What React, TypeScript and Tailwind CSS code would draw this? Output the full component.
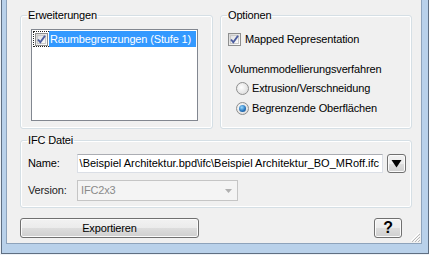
import React from "react";

function Check() {
  return (
    <div className="relative w-[13px] h-[13px] flex-none border border-[#8e8f8f] bg-[linear-gradient(135deg,#d6d6d6,#ffffff)] p-[1px]">
      <div className="w-full h-full border border-[#c9c9c9] bg-[linear-gradient(135deg,#e2e2e2,#fbfbfb)]" />
      <svg className="absolute left-0 top-0" width="11" height="11" viewBox="0 0 11 11">
        <path d="M2 5.5 L4.3 8.3 L9 1.8" fill="none" stroke="#4b5c9e" strokeWidth="1.9" />
      </svg>
    </div>
  );
}

function Radio({ on }: { on?: boolean }) {
  return (
    <div className="w-[13px] h-[13px] flex-none rounded-full border border-[#8e8f8f] bg-[radial-gradient(circle_at_40%_40%,#ffffff,#d4d4d4)] flex items-center justify-center">
      {on && (
        <div className="w-[7px] h-[7px] rounded-full bg-[radial-gradient(circle_at_40%_35%,#9adbff,#2a78c0_55%,#0e3f78)]" />
      )}
    </div>
  );
}

const btn =
  "border border-[#707070] rounded-[3px] bg-[linear-gradient(#f2f2f2,#ebebeb_50%,#dddddd_50%,#cfcfcf)] shadow-[inset_0_0_0_1px_#fbfbfb] flex items-center justify-center";

export default function App() {
  return (
    <div className="w-[429px] h-[255px] bg-[#eef2f7] pl-[1px] pb-[1px] font-['Liberation_Sans',Arial,sans-serif] text-[11px] tracking-[-0.15px] text-black">
      <div className="w-full h-full flex border-l border-r border-b border-[#5f6f82] bg-[#b9d1ea] pl-[4px] pr-[6px] pb-[9px]">
        <div className="relative flex-1 flex flex-col border-l border-r border-b border-[#8ea3bb] bg-[#f0f0f0] pt-[8px] pl-[13px] pr-[9px]">
          {/* top row */}
          <div className="flex gap-[7px]">
            <fieldset className="w-[193px] h-[121px] border border-[#d5dfe5] rounded-[3px] shadow-[inset_0_0_0_1px_#ffffff]">
              <legend className="ml-[6px] px-[1px] leading-[14px]">Erweiterungen</legend>
              <div className="ml-[10px] mt-[7px] w-[167px] h-[92px] border border-[#828790] bg-white p-[1px]">
                <div className="flex h-[16px]">
                  <div className="flex items-center pl-[1px] pr-[1px] border-l border-t border-b border-dotted border-[#222]">
                    <Check />
                  </div>
                  <div className="flex-1 bg-[#3399ff] text-white flex items-center pl-[1px] leading-[16px]">
                    Raumbegrenzungen (Stufe 1)
                  </div>
                </div>
              </div>
            </fieldset>
            <fieldset className="w-[192px] h-[121px] border border-[#d5dfe5] rounded-[3px] shadow-[inset_0_0_0_1px_#ffffff]">
              <legend className="ml-[6px] px-[1px] leading-[14px]">Optionen</legend>
              <div className="mt-[8px] h-[18px] flex items-center pl-[7px] gap-[4px]">
                <Check />
                <span>Mapped Representation</span>
              </div>
              <div className="mt-[12px] h-[18px] flex items-center pl-[7px]">Volumenmodellierungsverfahren</div>
              <div className="h-[20px] flex items-center pl-[15px] gap-[3px]">
                <Radio />
                <span>Extrusion/Verschneidung</span>
              </div>
              <div className="h-[20px] flex items-center pl-[15px] gap-[3px]">
                <Radio on />
                <span>Begrenzende Oberflächen</span>
              </div>
            </fieldset>
          </div>

          {/* IFC Datei */}
          <fieldset className="mt-[4px] w-[392px] h-[75px] border border-[#d5dfe5] rounded-[3px] shadow-[inset_0_0_0_1px_#ffffff]">
            <legend className="ml-[6px] px-[1px] leading-[14px]">IFC Datei</legend>
            <div className="mt-[7px] flex items-center pl-[7px]">
              <span className="w-[49px]">Name:</span>
              <div className="w-[306px] h-[19px] bg-white border border-[#dbdfe6] border-t-[#abadb3] overflow-hidden flex justify-end items-center pr-[3px]">
                <span className="whitespace-nowrap tracking-normal">
                  \Beispiel Architektur.bpd\ifc\Beispiel Architektur_BO_MRoff.ifc
                </span>
              </div>
              <div className={`ml-[4px] w-[19px] h-[19px] ${btn}`}>
                <svg width="11" height="9" viewBox="0 0 11 9">
                  <path d="M0.5 1 L10.5 1 L5.5 8.5 Z" fill="#000" />
                </svg>
              </div>
            </div>
            <div className="mt-[7px] flex items-center pl-[7px]">
              <span className="w-[49px] text-[#222]">Version:</span>
              <div className="w-[161px] h-[21px] bg-[#f4f4f4] border border-[#c5c5c5] flex items-center justify-between pl-[3px] pr-[5px]">
                <span className="text-[#8a8a8a]">IFC2x3</span>
                <svg width="7" height="4" viewBox="0 0 7 4">
                  <path d="M0 0 L7 0 L3.5 4 Z" fill="#b0b0b0" />
                </svg>
              </div>
            </div>
          </fieldset>

          {/* buttons */}
          <div className="mt-[10px] flex justify-between pr-[10px]">
            <div className={`w-[179px] h-[20px] ${btn}`}>Exportieren</div>
            <div className={`w-[28px] h-[20px] ${btn} text-[16px] font-bold leading-none`}>?</div>
          </div>

          <svg className="absolute right-[1px] bottom-[1px]" width="11" height="11" viewBox="0 0 11 11">
            <path d="M10 2 L2 10 M10 5 L5 10 M10 8 L8 10" stroke="#ffffff" strokeWidth="1" />
            <path d="M11 3 L3 11 M11 6 L6 11 M11 9 L9 11" stroke="#b8b8b8" strokeWidth="1" />
          </svg>
        </div>
      </div>
    </div>
  );
}
